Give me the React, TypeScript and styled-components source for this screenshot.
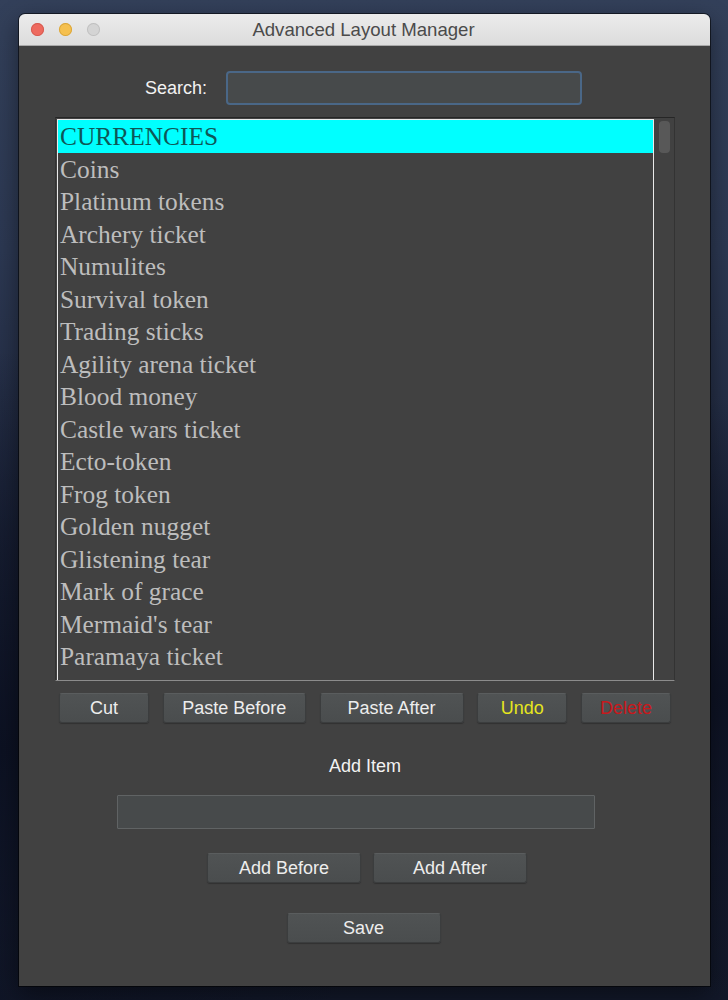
import React from 'react';
import styled, { createGlobalStyle } from 'styled-components';

const GlobalStyle = createGlobalStyle`
  html, body {
    margin: 0;
    padding: 0;
    height: 1000px;
    overflow: hidden;
  }
  body {
    background:
      radial-gradient(ellipse 60% 40% at 0% 75%, #0c1122 0%, rgba(12, 17, 34, 0) 100%),
      radial-gradient(ellipse 40% 30% at 100% 70%, #0d1223 0%, rgba(13, 18, 35, 0) 100%),
      linear-gradient(180deg, #33405a 0%, #2c3852 25%, #1d253b 55%, #121829 100%);
    font-family: "Liberation Sans", Arial, sans-serif;
  }
`;

const items = [
    'CURRENCIES',
    'Coins',
    'Platinum tokens',
    'Archery ticket',
    'Numulites',
    'Survival token',
    'Trading sticks',
    'Agility arena ticket',
    'Blood money',
    'Castle wars ticket',
    'Ecto-token',
    'Frog token',
    'Golden nugget',
    'Glistening tear',
    'Mark of grace',
    "Mermaid's tear",
    'Paramaya ticket',
];

const Desktop = styled.div`
  height: 1000px;
  padding: 14px 0 0 19px;
  box-sizing: border-box;
`;

const Window = styled.div`
  width: 691px;
  height: 972px;
  display: flex;
  flex-direction: column;
  border-radius: 6px 6px 0 0;
  overflow: hidden;
  box-shadow: 0 0 0 1px rgba(0, 0, 0, 0.55), 0 8px 24px rgba(0, 0, 0, 0.45);
`;

const TitleBar = styled.div`
  position: relative;
  height: 31px;
  flex: none;
  display: flex;
  align-items: center;
  justify-content: center;
  background: linear-gradient(180deg, #ececec 0%, #dcdcdc 100%);
  border-bottom: 1px solid #a9a9a9;
`;

const Lights = styled.div`
  position: absolute;
  left: 12px;
  top: 9px;
  display: flex;
  gap: 15px;
`;

const Light = styled.span<{ color: string; edge: string }>`
  width: 13px;
  height: 13px;
  border-radius: 50%;
  background: ${p => p.color};
  box-shadow: inset 0 0 0 1px ${p => p.edge};
`;

const Title = styled.span`
  font-size: 18.6px;
  color: #4b4b4b;
  margin-left: -2px;
`;

const Content = styled.div`
  flex: 1;
  display: flex;
  flex-direction: column;
  align-items: center;
  background: #414141;
  padding: 25px 35px 0 36px;
  box-sizing: border-box;
`;

const SearchRow = styled.div`
  display: flex;
  align-items: center;
  gap: 19px;
  height: 34px;
  margin-right: 3px;
`;

const Label = styled.span`
  font-size: 18px;
  color: #f2f2f2;
`;

const Field = styled.div<{ width: number; focused?: boolean }>`
  width: ${p => p.width}px;
  height: 34px;
  box-sizing: border-box;
  background: #474a4b;
  border: ${p => (p.focused ? '2px solid #4a6787' : '1px solid #606364')};
  border-radius: ${p => (p.focused ? '4px' : '1px')};
`;

const ListPanel = styled.div`
  align-self: stretch;
  margin-top: 12px;
  height: 564px;
  display: flex;
  box-sizing: border-box;
  border-top: 1px solid #262626;
  border-left: 1px solid #333;
  border-right: 1px solid #333;
  border-bottom: 1px solid #8c8c8c;
  padding: 1px 0 0 1px;
`;

const ListView = styled.div`
  flex: 1;
  border: 1px solid #e9e9e9;
  border-bottom: none;
  overflow: hidden;
`;

const Row = styled.div<{ selected?: boolean }>`
  height: 32.5px;
  line-height: 32.5px;
  padding-left: 2px;
  font-family: "Liberation Serif", "Times New Roman", serif;
  font-size: 25.4px;
  white-space: nowrap;
  color: ${p => (p.selected ? '#0e5757' : '#bdbdbd')};
  background: ${p => (p.selected ? '#00ffff' : 'transparent')};
`;

const ScrollTrack = styled.div`
  width: 20px;
  flex: none;
  display: flex;
  justify-content: center;
  padding-top: 2px;
`;

const Thumb = styled.div`
  width: 11px;
  height: 32px;
  border-radius: 4px;
  background: #585858;
`;

const ButtonRow = styled.div`
  align-self: stretch;
  display: flex;
  justify-content: space-between;
  padding: 0 4px;
  margin-top: 12px;
`;

const Button = styled.button<{ width: number; tone?: string }>`
  width: ${p => p.width}px;
  height: 30px;
  padding: 0;
  font-family: "Liberation Sans", Arial, sans-serif;
  font-size: 18px;
  color: ${p => p.tone || '#ededed'};
  background: linear-gradient(180deg, #505354 0%, #4a4d4e 100%);
  border: 1px solid #3b3d3e;
  border-top-color: #5a5d5e;
  border-radius: 3px;
  box-shadow: 0 1px 1px rgba(0, 0, 0, 0.25);
`;

const SectionLabel = styled(Label)`
  margin-top: 32px;
  line-height: 22px;
`;

const AddRow = styled.div<{ top: number; shift?: number }>`
  display: flex;
  gap: 12px;
  margin-top: ${p => p.top}px;
  margin-right: ${p => p.shift || 0}px;
`;

export default function App() {
    return (
        <>
            <GlobalStyle />
            <Desktop>
                <Window>
                    <TitleBar>
                        <Lights>
                            <Light color="#ee6a5f" edge="#d55a50" />
                            <Light color="#f5c04f" edge="#d9a53a" />
                            <Light color="#d4d4d4" edge="#c0c0c0" />
                        </Lights>
                        <Title>Advanced Layout Manager</Title>
                    </TitleBar>
                    <Content>
                        <SearchRow>
                            <Label>Search:</Label>
                            <Field width={356} focused />
                        </SearchRow>
                        <ListPanel>
                            <ListView>
                                {items.map((item, i) => (
                                    <Row key={item} selected={i === 0}>{item}</Row>
                                ))}
                            </ListView>
                            <ScrollTrack>
                                <Thumb />
                            </ScrollTrack>
                        </ListPanel>
                        <ButtonRow>
                            <Button width={90}>Cut</Button>
                            <Button width={143}>Paste Before</Button>
                            <Button width={144}>Paste After</Button>
                            <Button width={90} tone="#e6e61e">Undo</Button>
                            <Button width={90} tone="#c8181c">Delete</Button>
                        </ButtonRow>
                        <SectionLabel>Add Item</SectionLabel>
                        <AddRow top={18} shift={19}>
                            <Field width={478} />
                        </AddRow>
                        <AddRow top={24} shift={-4}>
                            <Button width={154}>Add Before</Button>
                            <Button width={154}>Add After</Button>
                        </AddRow>
                        <AddRow top={30} shift={3}>
                            <Button width={154}>Save</Button>
                        </AddRow>
                    </Content>
                </Window>
            </Desktop>
        </>
    );
}
